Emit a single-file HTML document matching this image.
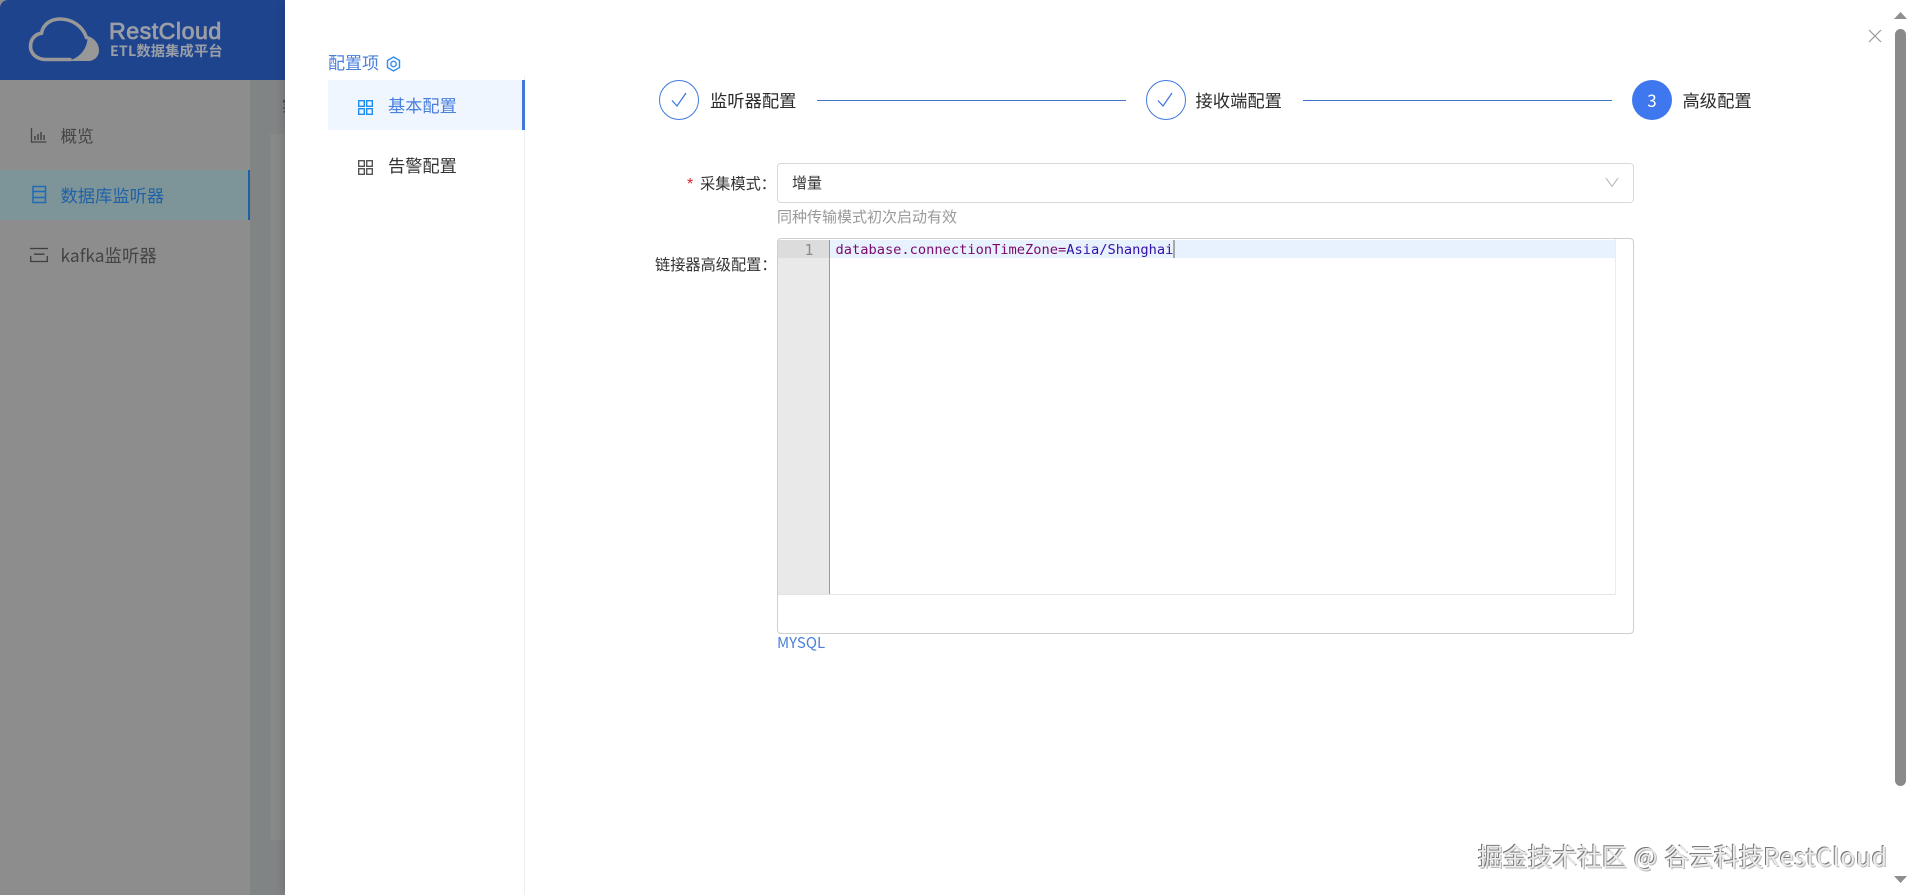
<!DOCTYPE html>
<html lang="zh"><head><meta charset="utf-8"><title>RestCloud</title>
<style>
html,body{margin:0;padding:0;width:1910px;height:895px;overflow:hidden;background:#fff}
body{position:relative;font-family:"Noto Sans CJK SC","Liberation Sans",sans-serif;color:#333}
.a{position:absolute;white-space:nowrap}
.t{position:absolute;white-space:nowrap;line-height:24px;height:24px}
svg{position:absolute;overflow:visible}
</style></head><body>
<!-- background app -->
<div class="a" style="left:0;top:0;width:285px;height:895px;background:#8d8d8d"></div>
<div class="a" style="left:250px;top:80px;width:35px;height:815px;background:#808484"></div>
<div class="a" style="left:270px;top:134px;width:15px;height:706px;background:#878989"></div>
<div class="t" style="left:282px;top:94px;font-size:15px;color:#3a3a3a">实</div>
<div class="a" style="left:0;top:0;width:285px;height:80px;background:#1f448e;border-top-left-radius:8px"></div>
<svg style="left:0;top:0" width="120" height="80" viewBox="0 0 120 80">
<path d="M70 59.5H46C36 59.5 30.5 53 30.5 46.5C30.5 39 35.5 34 41.5 33.2C43 24.5 50.5 19 60 19C72 19 82.5 26 86.5 37.5" fill="none" stroke="#989898" stroke-width="3.6" stroke-linecap="round"/>
<path d="M87.5 36C94.5 38 99 44 99 50C99 57 94 61 88 61H67C78 59 88 50 87.5 36Z" fill="#989898"/>
</svg>
<div class="a" style="left:109px;top:18px;font:400 23.2px/26px 'Liberation Sans',sans-serif;color:#9a9ea6;letter-spacing:.5px;-webkit-text-stroke:.8px #9a9ea6">RestCloud</div>
<div class="a" style="left:110px;top:43px;font:700 14.2px/17px 'Noto Sans CJK SC',sans-serif;color:#9a9ea6;letter-spacing:.2px">ETL数据集成平台</div>
<!-- sidebar -->
<svg style="left:30px;top:127px" width="18" height="17" viewBox="0 0 18 17" fill="none" stroke="#444" stroke-width="1.3"><path d="M1.5 1V15H16.5"/><path d="M5 13V9M8 13V7M11 13V5M14 13V8" stroke-width="1.5"/></svg>
<div class="t" style="left:60.5px;top:123px;font-size:16.6px;color:#444">概览</div>
<div class="a" style="left:0;top:170px;width:248px;height:50px;background:#7d9498"></div>
<div class="a" style="left:248px;top:170px;width:2px;height:50px;background:#1e5fa8"></div>
<svg style="left:31px;top:185px" width="16" height="19" viewBox="0 0 16 19" fill="none" stroke="#1f6bb5" stroke-width="1.5"><rect x="2" y="1.5" width="12.5" height="16"/><path d="M2 6.5H14.5M2 12.5H14.5"/></svg>
<div class="t" style="left:60.5px;top:183px;font-size:17.3px;color:#1f62a8">数据库监听器</div>
<svg style="left:29px;top:247px" width="20" height="16" viewBox="0 0 20 16" fill="none" stroke="#3f3f3f" stroke-width="1.3"><path d="M1 1.5H19M5 7.2H15.5M1.7 9V14.5H18.3V9"/></svg>
<div class="t" style="left:60.5px;top:243.5px;font-size:17.4px;color:#444">kafka监听器</div>
<!-- drawer -->
<div class="a" style="left:285px;top:0;width:1625px;height:895px;background:#fff;box-shadow:-4px 0 8px -3px rgba(0,0,0,.18)"></div>
<div class="a" style="left:524px;top:76px;width:1px;height:819px;background:#eeeeee"></div>
<div class="t" style="left:328px;top:50px;font-size:17px;color:#4a7fdc">配置项</div>
<svg style="left:386px;top:56px" width="15" height="16" viewBox="0 0 15 16" fill="none" stroke="#2d8cf0" stroke-width="1.4"><path d="M7.5 1L13.5 4.5V11.5L7.5 15L1.5 11.5V4.5Z"/><circle cx="7.5" cy="8" r="2.7"/></svg>
<div class="a" style="left:328px;top:80px;width:194px;height:50px;background:#eff6ff"></div>
<div class="a" style="left:522px;top:80px;width:3px;height:50px;background:#3f78de"></div>
<svg style="left:358px;top:100px" width="15" height="15" viewBox="0 0 15 15" fill="none" stroke="#1f8cf0" stroke-width="1.4"><rect x=".7" y=".7" width="5.6" height="5.6"/><rect x="8.7" y=".7" width="5.6" height="5.6"/><rect x=".7" y="8.7" width="5.6" height="5.6"/><rect x="8.7" y="8.7" width="5.6" height="5.6"/></svg>
<div class="t" style="left:388px;top:93px;font-size:17.2px;color:#4a7fdc">基本配置</div>
<svg style="left:358px;top:160px" width="15" height="15" viewBox="0 0 15 15" fill="none" stroke="#555" stroke-width="1.4"><rect x=".7" y=".7" width="5.6" height="5.6"/><rect x="8.7" y=".7" width="5.6" height="5.6"/><rect x=".7" y="8.7" width="5.6" height="5.6"/><rect x="8.7" y="8.7" width="5.6" height="5.6"/></svg>
<div class="t" style="left:388px;top:153px;font-size:17.2px;color:#333">告警配置</div>
<!-- steps -->
<div class="a" style="left:659px;top:80px;width:38px;height:38px;border:1px solid #3f78de;border-radius:50%"></div>
<svg style="left:670px;top:90px" width="18" height="20" viewBox="0 0 18 20" fill="none" stroke="#3f78de" stroke-width="1.3"><path d="M2 10.5L7 16L16 3"/></svg>
<div class="t" style="left:710px;top:88px;font-size:17.3px;color:#2b2b2b">监听器配置</div>
<div class="a" style="left:817px;top:100px;width:309px;height:1px;background:#3f78c8"></div>
<div class="a" style="left:1146px;top:80px;width:38px;height:38px;border:1px solid #3f78de;border-radius:50%"></div>
<svg style="left:1156px;top:90px" width="18" height="20" viewBox="0 0 18 20" fill="none" stroke="#3f78de" stroke-width="1.3"><path d="M2 10.5L7 16L16 3"/></svg>
<div class="t" style="left:1195.5px;top:88px;font-size:17.3px;color:#2b2b2b">接收端配置</div>
<div class="a" style="left:1303px;top:100px;width:309px;height:1px;background:#3f78c8"></div>
<div class="a" style="left:1632px;top:80px;width:40px;height:40px;background:#3f78ee;border-radius:50%;color:#fff;text-align:center;font:17px/40px 'Noto Sans CJK SC',sans-serif">3</div>
<div class="t" style="left:1682.5px;top:88px;font-size:17.3px;color:#2b2b2b">高级配置</div>
<!-- form -->
<div class="a" style="left:687px;top:175px;font:16px/20px 'Liberation Sans',sans-serif;color:#d4242e">*</div>
<div class="t" style="left:700px;top:171px;font-size:15.2px;color:#333">采集模式：</div>
<div class="a" style="left:777px;top:163px;width:855px;height:38px;border:1px solid #d9d9d9;border-radius:4px;background:#fff"></div>
<div class="t" style="left:792px;top:171px;font-size:15px;color:#333">增量</div>
<svg style="left:1605px;top:176px" width="14" height="12" viewBox="0 0 14 12" fill="none" stroke="#bdbdbd" stroke-width="1.1"><path d="M1 2L7 10.5L13 2"/></svg>
<div class="t" style="left:777px;top:205px;font-size:15px;color:#999">同种传输模式初次启动有效</div>
<div class="t" style="left:655px;top:252px;font-size:15.2px;color:#333">链接器高级配置：</div>
<div class="a" style="left:777px;top:238px;width:855px;height:394px;border:1px solid #cfcfcf;border-radius:4px;background:#fff"></div>
<div class="a" style="left:778px;top:240px;width:51px;height:354px;background:#e9e9e9;border-right:1px solid #9a9a9a"></div>
<div class="a" style="left:778px;top:240px;width:51px;height:18px;background:#dcdcdc"></div>
<div class="a" style="left:830px;top:240px;width:785px;height:18px;background:#e8f1fe"></div>
<div class="a" style="left:778px;top:594px;width:837px;height:1px;background:#e5e5e5"></div>
<div class="a" style="left:1615px;top:239px;width:1px;height:356px;background:#ececec"></div>
<div class="a" style="left:804.5px;top:240.5px;font:15px/18px 'DejaVu Sans Mono',monospace;color:#8a8a8a">1</div>
<div class="a" style="left:835.5px;top:241px;font:13.7px/18px 'DejaVu Sans Mono','Liberation Mono',monospace"><span style="color:#7a0a6a">database.connectionTimeZone=</span><span style="color:#3311aa">Asia/Shanghai</span></div>
<div class="a" style="left:1173px;top:240px;width:2px;height:18px;background:#a8a8a8"></div>
<div class="t" style="left:777px;top:631px;font-size:15px;color:#4a7fdc">MYSQL</div>
<!-- close + scrollbar -->
<svg style="left:1868px;top:29px" width="14" height="14" viewBox="0 0 14 14" fill="none" stroke="#999" stroke-width="1.2"><path d="M1 1L13 13M13 1L1 13"/></svg>
<div class="a" style="left:1895px;top:29px;width:11px;height:757px;background:#8a8a8a;border-radius:5.5px"></div>
<svg style="left:1894px;top:12px" width="13" height="8" viewBox="0 0 13 8"><path d="M6.5 0L13 7H0Z" fill="#8f8f8f"/></svg>
<svg style="left:1894px;top:876px" width="13" height="8" viewBox="0 0 13 8"><path d="M0 0H13L6.5 7Z" fill="#8f8f8f"/></svg>
<!-- watermark -->
<div class="a" style="left:1478px;top:837px;font-size:24.8px;line-height:38px;color:#ebebeb;text-shadow:-1px -1px 0 #777,1px 1px 0 #bbb;word-spacing:1.5px">掘金技术社区 @ 谷云科技<span style="letter-spacing:.7px">RestCloud</span></div>
</body></html>
